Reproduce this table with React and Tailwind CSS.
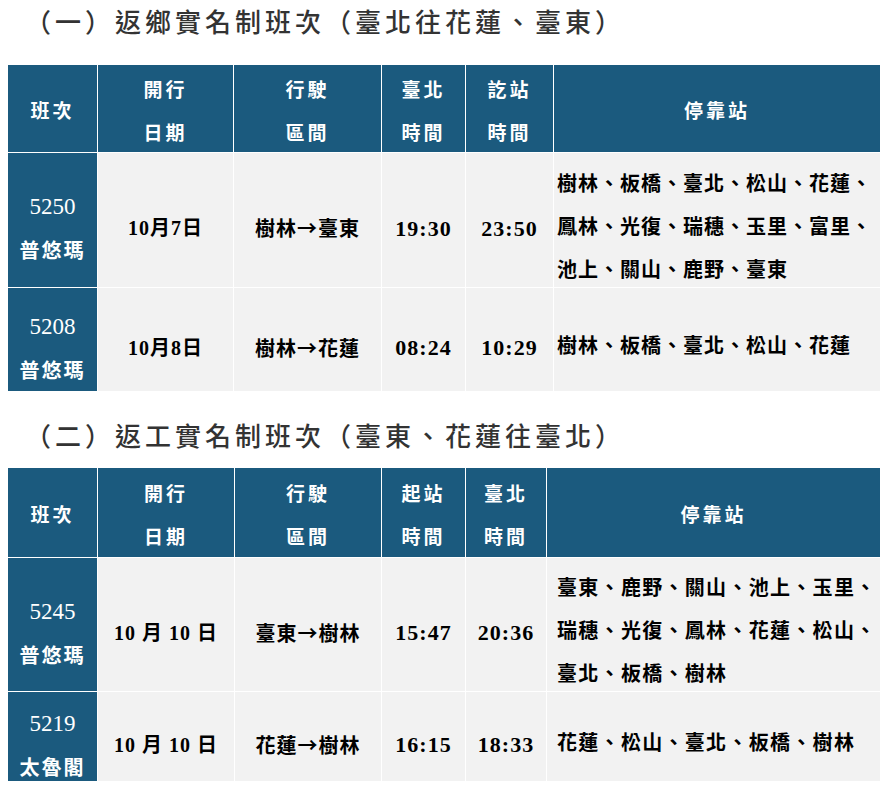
const font = { fontFamily: '"Liberation Serif", "Noto Sans CJK TC", serif' };
const cjk = { fontFamily: '"Noto Sans CJK TC", "Liberation Serif", serif' };

const tables = [
  {
    title: '（一）返鄉實名制班次（臺北往花蓮、臺東）',
    cols: ['w-[90px]', 'w-[136px]', 'w-[148px]', 'w-[84px]', 'w-[88px]', 'w-[327px]'],
    headers: [['班次'], ['開行', '日期'], ['行駛', '區間'], ['臺北', '時間'], ['訖站', '時間'], ['停靠站']],
    headH: 'h-[88px]',
    stopsPad: 'pl-[3px] tracking-[1px]',
    rows: [
      {
        h: 'h-[135px]',
        no: '5250',
        name: '普悠瑪',
        date: '10月7日',
        route: '樹林→臺東',
        t1: '19:30',
        t2: '23:50',
        stops: ['樹林、板橋、臺北、松山、花蓮、', '鳳林、光復、瑞穗、玉里、富里、', '池上、關山、鹿野、臺東'],
      },
      {
        h: 'h-[104px]',
        no: '5208',
        name: '普悠瑪',
        date: '10月8日',
        route: '樹林→花蓮',
        t1: '08:24',
        t2: '10:29',
        stops: ['樹林、板橋、臺北、松山、花蓮'],
      },
    ],
  },
  {
    title: '（二）返工實名制班次（臺東、花蓮往臺北）',
    cols: ['w-[90px]', 'w-[137px]', 'w-[147px]', 'w-[84px]', 'w-[81px]', 'w-[334px]'],
    headers: [['班次'], ['開行', '日期'], ['行駛', '區間'], ['起站', '時間'], ['臺北', '時間'], ['停靠站']],
    headH: 'h-[90px]',
    stopsPad: 'pl-[10px] tracking-[1.3px]',
    rows: [
      {
        h: 'h-[134px]',
        no: '5245',
        name: '普悠瑪',
        date: '10 月 10 日',
        route: '臺東→樹林',
        t1: '15:47',
        t2: '20:36',
        stops: ['臺東、鹿野、關山、池上、玉里、', '瑞穗、光復、鳳林、花蓮、松山、', '臺北、板橋、樹林'],
      },
      {
        h: 'h-[90px]',
        no: '5219',
        name: '太魯閣',
        date: '10 月 10 日',
        route: '花蓮→樹林',
        t1: '16:15',
        t2: '18:33',
        stops: ['花蓮、松山、臺北、板橋、樹林'],
      },
    ],
  },
];

const cell = 'bg-[#f2f2f2] border border-white text-black align-middle p-0';

function Schedule({ data }) {
  return (
    <table className="table-fixed border-collapse w-[873px]" style={font}>
      <colgroup>
        {data.cols.map((c, i) => (
          <col key={i} className={c} />
        ))}
      </colgroup>
      <thead>
        <tr className={data.headH}>
          {data.headers.map((lines, i) => (
            <th
              key={i}
              className="bg-[#1b5a7e] border border-white text-white font-bold text-[19px] tracking-[3px] leading-[43px] text-center align-middle p-0"
            >
              <div className="translate-y-[3px]">
                {lines.map((l) => (
                  <div key={l}>{l}</div>
                ))}
              </div>
            </th>
          ))}
        </tr>
      </thead>
      <tbody>
        {data.rows.map((r) => (
          <tr key={r.no} className={r.h}>
            <td className="bg-[#1b5a7e] border border-white text-white text-center align-middle p-0">
              <div className="translate-y-[9px]">
                <div className="text-[23px] leading-[44px]">{r.no}</div>
                <div className="text-[20px] font-bold tracking-[2px] leading-[44px]">{r.name}</div>
              </div>
            </td>
            <td className={`${cell} font-bold text-[20px] text-center tracking-[1px]`}>
              <div className="translate-y-[8px]">{r.date}</div>
            </td>
            <td className={`${cell} font-bold text-[20px] text-center tracking-[1px]`} style={cjk}>
              <div className="translate-y-[8px]">{r.route}</div>
            </td>
            <td className={`${cell} font-bold text-[22px] text-center tracking-[1px]`}>
              <div className="translate-y-[8px]">{r.t1}</div>
            </td>
            <td className={`${cell} font-bold text-[22px] text-center tracking-[1px]`}>
              <div className="translate-y-[8px]">{r.t2}</div>
            </td>
            <td className={`${cell} ${data.stopsPad} font-bold text-[20px] leading-[43px] whitespace-nowrap`}>
              <div className="translate-y-[7px]">
                {r.stops.map((s) => (
                  <div key={s}>{s}</div>
                ))}
              </div>
            </td>
          </tr>
        ))}
      </tbody>
    </table>
  );
}

export default function App() {
  return (
    <div className="w-[888px] h-[788px] bg-white overflow-hidden pl-[7px]">
      <h2
        className="h-[64px] flex items-center pl-[18px] pb-[18px] text-[26px] tracking-[4px] text-[#333333] font-medium"
        style={font}
      >
        {tables[0].title}
      </h2>
      <Schedule data={tables[0]} />
      <h2
        className="h-[75px] flex items-center pl-[18px] pt-[15px] text-[26px] tracking-[4px] text-[#333333] font-medium"
        style={font}
      >
        {tables[1].title}
      </h2>
      <Schedule data={tables[1]} />
    </div>
  );
}
